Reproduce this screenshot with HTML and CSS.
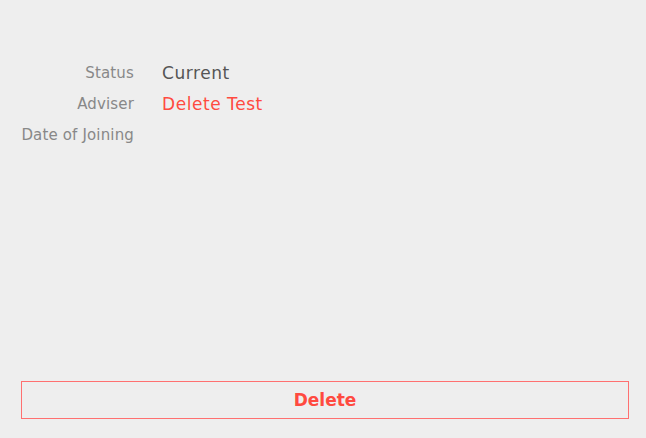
FILE: index.html
```html
<!DOCTYPE html>
<html>
<head>
<meta charset="utf-8">
<link rel="stylesheet" href="styles.css">
</head>
<body>
<div class="page">
  <div class="details">
    <div class="row"><div class="label">Status</div><div class="value">Current</div></div>
    <div class="row"><div class="label">Adviser</div><div class="value link">Delete Test</div></div>
    <div class="row"><div class="label">Date of Joining</div><div class="value"></div></div>
  </div>
  <button class="delete">Delete</button>
</div>
</body>
</html>
```
FILE: styles.css
```css
html, body {
  margin: 0;
  padding: 0;
  background: #eeeeee;
  font-family: "DejaVu Sans", Verdana, sans-serif;
}
.page {
  height: 438px;
  box-sizing: border-box;
  display: flex;
  flex-direction: column;
  padding: 57px 17px 19px 21px;
}
.details {
  flex: 1;
  display: flex;
  flex-direction: column;
}
.row {
  display: flex;
  align-items: center;
  height: 31px;
}
.label {
  width: 113px;
  text-align: right;
  font-size: 15px;
  letter-spacing: 0.15px;
  color: #888888;
}
.value {
  margin-left: 28px;
  font-size: 17px;
  letter-spacing: 0.55px;
  color: #555555;
}
.value.link {
  color: #ff4a40;
}
.delete {
  height: 38px;
  width: 608px;
  box-sizing: border-box;
  border: 1px solid #ff7070;
  background: transparent;
  color: #ff4a40;
  font-family: "DejaVu Sans", Verdana, sans-serif;
  font-weight: bold;
  font-size: 17px;
  padding: 0;
}
```
